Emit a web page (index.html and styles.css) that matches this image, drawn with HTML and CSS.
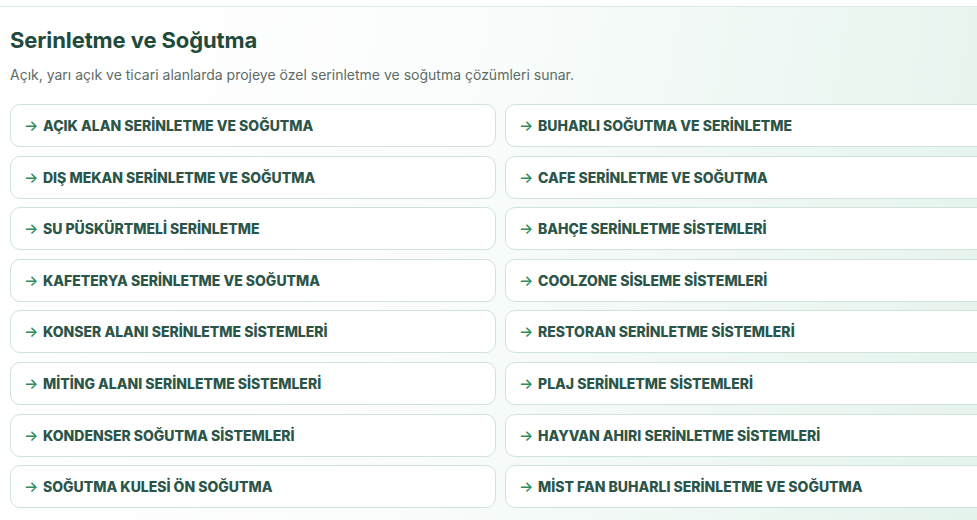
FILE: index.html
```html
<!DOCTYPE html>
<html lang="tr">
<head>
<meta charset="utf-8">
<title>Serinletme ve Soğutma</title>
<link rel="stylesheet" href="styles.css">
</head>
<body>
<section class="panel">
  <h2 class="title">Serinletme ve Soğutma</h2>
  <p class="lead">Açık, yarı açık ve ticari alanlarda projeye özel serinletme ve soğutma çözümleri sunar.</p>
  <div class="grid">
    <a class="item" href="#"><span class="arrow">→</span>AÇIK ALAN SERİNLETME VE SOĞUTMA</a>
    <a class="item" href="#"><span class="arrow">→</span>BUHARLI SOĞUTMA VE SERİNLETME</a>
    <a class="item" href="#"><span class="arrow">→</span>DIŞ MEKAN SERİNLETME VE SOĞUTMA</a>
    <a class="item" href="#"><span class="arrow">→</span>CAFE SERİNLETME VE SOĞUTMA</a>
    <a class="item" href="#"><span class="arrow">→</span>SU PÜSKÜRTMELİ SERİNLETME</a>
    <a class="item" href="#"><span class="arrow">→</span>BAHÇE SERİNLETME SİSTEMLERİ</a>
    <a class="item" href="#"><span class="arrow">→</span>KAFETERYA SERİNLETME VE SOĞUTMA</a>
    <a class="item" href="#"><span class="arrow">→</span>COOLZONE SİSLEME SİSTEMLERİ</a>
    <a class="item" href="#"><span class="arrow">→</span>KONSER ALANI SERİNLETME SİSTEMLERİ</a>
    <a class="item" href="#"><span class="arrow">→</span>RESTORAN SERİNLETME SİSTEMLERİ</a>
    <a class="item" href="#"><span class="arrow">→</span>MİTİNG ALANI SERİNLETME SİSTEMLERİ</a>
    <a class="item" href="#"><span class="arrow">→</span>PLAJ SERİNLETME SİSTEMLERİ</a>
    <a class="item" href="#"><span class="arrow">→</span>KONDENSER SOĞUTMA SİSTEMLERİ</a>
    <a class="item" href="#"><span class="arrow">→</span>HAYVAN AHIRI SERİNLETME SİSTEMLERİ</a>
    <a class="item" href="#"><span class="arrow">→</span>SOĞUTMA KULESİ ÖN SOĞUTMA</a>
    <a class="item" href="#"><span class="arrow">→</span>MİST FAN BUHARLI SERİNLETME VE SOĞUTMA</a>
  </div>
</section>
</body>
</html>
```
FILE: styles.css
```css
html, body {
  margin: 0;
  padding: 0;
  background: #ffffff;
  overflow: hidden;
}
body {
  font-family: Inter, "Noto Sans", sans-serif;
  padding-top: 6px;
}
.panel {
  width: 1001px;
  box-sizing: border-box;
  border-top: 1px solid #d9ebe4;
  padding: 18px 10px 12px;
  background: linear-gradient(100deg, #ffffff 0%, #fbfdfc 40%, #e4f3ec 100%);
  height: 514px;
}
.title {
  margin: 0;
  font-size: 22px;
  line-height: 30px;
  font-weight: 700;
  color: #1f4a3c;
  letter-spacing: -0.1px;
}
.lead {
  margin: 10px 0 0;
  font-size: 14px;
  line-height: 20px;
  color: #5d6b66;
}
.grid {
  margin-top: 19px;
  display: grid;
  grid-template-columns: 486px 486px;
  column-gap: 9px;
  row-gap: 8.6px;
}
.item {
  display: flex;
  align-items: center;
  height: 43px;
  box-sizing: border-box;
  padding: 0 13px;
  border: 1px solid #cfe3dc;
  border-radius: 10px;
  background: #ffffff;
  color: #2b5548;
  font-size: 14px;
  font-weight: 800;
  text-decoration: none;
}
.arrow {
  width: 19px;
  color: #2f8a5c;
  font-weight: 500;
  font-size: 15px;
}
```
